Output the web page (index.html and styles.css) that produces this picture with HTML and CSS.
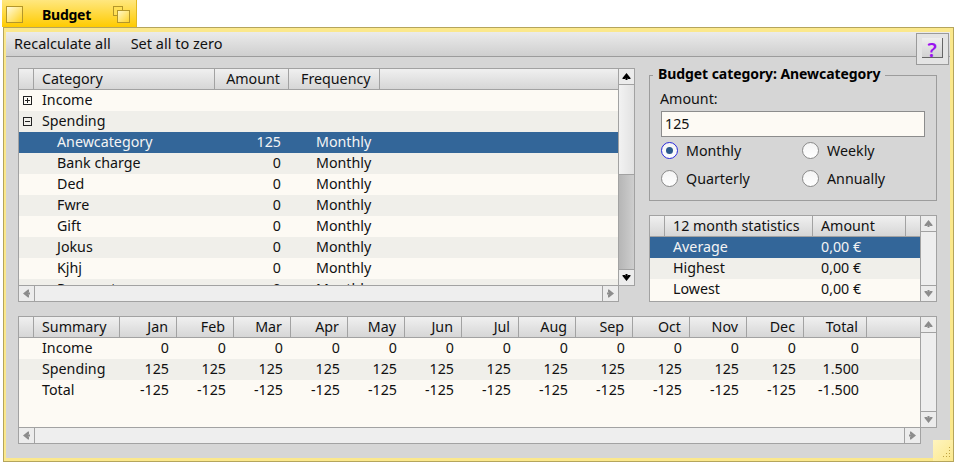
FILE: index.html
```html
<!DOCTYPE html>
<html lang="en">
<head>
    <meta charset="UTF-8">
    <title>Budget</title>
    <link rel="stylesheet" href="styles.css">
</head>
<body>
    <svg class="defs" width="0" height="0">
        <symbol id="arrow" viewBox="0 0 11 9">
            <path d="M5.5 1 L9.5 6 L9.5 7 L7 7 L6.5 6 L6.5 8 L4.5 8 L4.5 6 L4 7 L1.5 7 L1.5 6 Z"/>
        </symbol>
    </svg>

    <div class="tab">
        <span class="tab-close"></span>
        <span class="tab-title">Budget</span>
        <span class="tab-zoom"><i></i><b></b></span>
    </div>

    <div class="window">
        <div class="toolbar">
            <span>Recalculate all</span>
            <span>Set all to zero</span>
        </div>
        <div class="help"><span>?</span></div>

        <div class="content">
            <div class="top">
                <div class="list list-tree">
                    <div class="view">
                        <table>
                            <colgroup><col class="c-gutter"><col class="c-cat"><col class="c-amt"><col class="c-freq"><col></colgroup>
                            <thead>
                                <tr><th></th><th>Category</th><th class="num">Amount</th><th class="freq-head">Frequency</th><th></th></tr>
                            </thead>
                            <tbody>
                                <tr><td class="exp"><span class="expander plus"></span></td><td>Income</td><td></td><td></td><td></td></tr>
                                <tr><td class="exp"><span class="expander"></span></td><td>Spending</td><td></td><td></td><td></td></tr>
                                <tr class="selected"><td></td><td class="child">Anewcategory</td><td class="num">125</td><td class="freq">Monthly</td><td></td></tr>
                                <tr><td></td><td class="child">Bank charge</td><td class="num">0</td><td class="freq">Monthly</td><td></td></tr>
                                <tr><td></td><td class="child">Ded</td><td class="num">0</td><td class="freq">Monthly</td><td></td></tr>
                                <tr><td></td><td class="child">Fwre</td><td class="num">0</td><td class="freq">Monthly</td><td></td></tr>
                                <tr><td></td><td class="child">Gift</td><td class="num">0</td><td class="freq">Monthly</td><td></td></tr>
                                <tr><td></td><td class="child">Jokus</td><td class="num">0</td><td class="freq">Monthly</td><td></td></tr>
                                <tr><td></td><td class="child">Kjhj</td><td class="num">0</td><td class="freq">Monthly</td><td></td></tr>
                                <tr><td></td><td class="child">Payment</td><td class="num">0</td><td class="freq">Monthly</td><td></td></tr>
                            </tbody>
                        </table>
                    </div>
                    <div class="vsb">
                        <div class="sb-btn sb-up on"><svg class="arrow"><use href="#arrow"/></svg></div>
                        <div class="sb-thumb thumb-tree"></div>
                        <div class="sb-track"></div>
                        <div class="sb-btn sb-down on"><svg class="arrow down"><use href="#arrow"/></svg></div>
                    </div>
                    <div class="hsb">
                        <div class="sb-btn sb-left"><svg class="arrow left"><use href="#arrow"/></svg></div>
                        <div class="sb-thumb"></div>
                        <div class="sb-btn sb-right"><svg class="arrow right"><use href="#arrow"/></svg></div>
                    </div>
                </div>

                <div class="side">
                    <fieldset class="group">
                        <legend>Budget category: Anewcategory</legend>
                        <div class="field-label">Amount:</div>
                        <div class="field-input">125</div>
                        <div class="radios">
                            <div class="radio"><span class="dot checked"></span>Monthly</div>
                            <div class="radio"><span class="dot"></span>Weekly</div>
                            <div class="radio"><span class="dot"></span>Quarterly</div>
                            <div class="radio"><span class="dot"></span>Annually</div>
                        </div>
                    </fieldset>

                    <div class="list list-stats">
                        <div class="view">
                            <table>
                                <colgroup><col class="c-gutter"><col class="c-name"><col class="c-val"><col></colgroup>
                                <thead>
                                    <tr><th></th><th>12 month statistics</th><th>Amount</th><th></th></tr>
                                </thead>
                                <tbody>
                                    <tr class="selected"><td></td><td>Average</td><td>0,00 €</td><td></td></tr>
                                    <tr><td></td><td>Highest</td><td>0,00 €</td><td></td></tr>
                                    <tr><td></td><td>Lowest</td><td>0,00 €</td><td></td></tr>
                                </tbody>
                            </table>
                        </div>
                        <div class="vsb">
                            <div class="sb-btn sb-up"><svg class="arrow"><use href="#arrow"/></svg></div>
                            <div class="sb-thumb"></div>
                            <div class="sb-btn sb-down"><svg class="arrow down"><use href="#arrow"/></svg></div>
                        </div>
                    </div>
                </div>
            </div>

            <div class="list list-summary">
                <div class="view">
                    <table>
                        <colgroup><col class="c-gutter"><col class="c-sum"><col class="c-m" span="12"><col class="c-total"><col></colgroup>
                        <thead>
                            <tr>
                                <th></th><th>Summary</th>
                                <th class="num">Jan</th><th class="num">Feb</th><th class="num">Mar</th><th class="num">Apr</th>
                                <th class="num">May</th><th class="num">Jun</th><th class="num">Jul</th><th class="num">Aug</th>
                                <th class="num">Sep</th><th class="num">Oct</th><th class="num">Nov</th><th class="num">Dec</th>
                                <th class="num">Total</th><th></th>
                            </tr>
                        </thead>
                        <tbody>
                            <tr>
                                <td></td><td>Income</td>
                                <td class="num">0</td><td class="num">0</td><td class="num">0</td><td class="num">0</td>
                                <td class="num">0</td><td class="num">0</td><td class="num">0</td><td class="num">0</td>
                                <td class="num">0</td><td class="num">0</td><td class="num">0</td><td class="num">0</td>
                                <td class="num">0</td><td></td>
                            </tr>
                            <tr>
                                <td></td><td>Spending</td>
                                <td class="num">125</td><td class="num">125</td><td class="num">125</td><td class="num">125</td>
                                <td class="num">125</td><td class="num">125</td><td class="num">125</td><td class="num">125</td>
                                <td class="num">125</td><td class="num">125</td><td class="num">125</td><td class="num">125</td>
                                <td class="num">1.500</td><td></td>
                            </tr>
                            <tr>
                                <td></td><td>Total</td>
                                <td class="num">-125</td><td class="num">-125</td><td class="num">-125</td><td class="num">-125</td>
                                <td class="num">-125</td><td class="num">-125</td><td class="num">-125</td><td class="num">-125</td>
                                <td class="num">-125</td><td class="num">-125</td><td class="num">-125</td><td class="num">-125</td>
                                <td class="num">-1.500</td><td></td>
                            </tr>
                        </tbody>
                    </table>
                </div>
                <div class="vsb">
                    <div class="sb-btn sb-up"><svg class="arrow"><use href="#arrow"/></svg></div>
                    <div class="sb-thumb"></div>
                    <div class="sb-btn sb-down"><svg class="arrow down"><use href="#arrow"/></svg></div>
                </div>
                <div class="hsb">
                    <div class="sb-btn sb-left"><svg class="arrow left"><use href="#arrow"/></svg></div>
                    <div class="sb-thumb"></div>
                    <div class="sb-btn sb-right"><svg class="arrow right"><use href="#arrow"/></svg></div>
                </div>
            </div>
        </div>

        <div class="grip">
            <svg width="20" height="21" viewBox="0 0 20 21">
                <path d="M16 7h1v1h-1zM16 10h1v1h-1zM13 13h1v1h-1zM16 13h1v1h-1zM10 16h1v1h-1zM13 16h1v1h-1zM16 16h1v1h-1z" fill="#bfa345"/>
            </svg>
        </div>
    </div>
</body>
</html>
```

FILE: styles.css
```css
* {
    margin: 0;
    padding: 0;
    box-sizing: border-box;
}

body {
    font-family: "Noto Sans", sans-serif;
    font-size: 14.25px;
    color: #111;
    background: #fff;
    width: 955px;
    height: 462px;
    overflow: hidden;
}

.defs {
    display: block;
    height: 0;
}

/* Window tab */
.tab {
    display: flex;
    align-items: flex-start;
    width: 135px;
    height: 27px;
    margin-left: 2px;
    background: linear-gradient(#ffe77f, #ffcb00);
    border-right: 1px solid #e0b820;
}

.tab-close {
    width: 17px;
    height: 17px;
    margin: 6px 0 0 4px;
    border: 1px solid #b3962a;
    background: linear-gradient(135deg, #fffbe0, #ffd21e);
}

.tab-title {
    margin: 5px 0 0 19px;
    font-size: 14px;
    font-weight: 700;
    letter-spacing: -0.25px;
    color: #000;
}

.tab-zoom {
    position: relative;
    width: 17px;
    height: 17px;
    margin: 6px 6px 0 auto;
}

.tab-zoom i,
.tab-zoom b {
    position: absolute;
    display: block;
    border: 1px solid #b3962a;
}

.tab-zoom i {
    left: 0;
    top: 0;
    width: 10px;
    height: 10px;
    background: #ffdf55;
}

.tab-zoom b {
    left: 4px;
    top: 4px;
    width: 13px;
    height: 13px;
    background: linear-gradient(135deg, #fff6c4, #ffd52e);
}

/* Window frame */
.window {
    position: relative;
    display: flex;
    flex-direction: column;
    width: 951px;
    height: 435px;
    margin-left: 3px;
    padding: 4px 3px 3px 2px;
    background: #fbe88c;
    border: 1px solid #b5a55c;
}

.toolbar {
    display: flex;
    gap: 20px;
    height: 25px;
    padding: 0 0 2px 8px;
    align-items: center;
    font-size: 14.5px;
    background: linear-gradient(#ebebeb, #cfcfcf);
    border-bottom: 1px solid #9c9c9c;
}

.help {
    position: absolute;
    top: 5px;
    right: 4px;
    width: 33px;
    height: 32px;
    padding: 4px 5px 6px 5px;
    background: #e4e4e4;
    border: 1px solid #9a9a9a;
}

.help span {
    display: block;
    height: 100%;
    text-align: center;
    font-size: 20px;
    font-weight: 600;
    line-height: 23px;
    color: #9a14f0;
    background: linear-gradient(#eeeeee, #d2d2d2);
    border-right: 1px solid #666;
    border-bottom: 1px solid #666;
}

.content {
    flex: 1;
    padding: 11px 13px 0 12px;
    background: #d6d6d6;
}

.top {
    display: flex;
    gap: 14px;
    height: 234px;
    margin-bottom: 14px;
}

/* Lists with scrollbars */
.list {
    display: grid;
    flex: none;
    grid-template-columns: minmax(0, 1fr) 16px;
    grid-template-rows: minmax(0, 1fr) 16px;
}

.list-tree {
    width: 617px;
    height: 234px;
}

.list-stats {
    width: 288px;
    height: 87px;
    grid-template-rows: minmax(0, 1fr);
}

.list-summary {
    width: 919px;
    height: 128px;
}

.view {
    overflow: hidden;
    background: #fdfaf4;
    border: 1px solid #a2a2a2;
}

table {
    width: 100%;
    table-layout: fixed;
    border-collapse: separate;
    border-spacing: 0;
}

th {
    height: 21px;
    padding: 0 8px;
    font-weight: 400;
    line-height: 18px;
    text-align: left;
    white-space: nowrap;
    background: linear-gradient(#f0f0f0, #d6d6d6);
    border-right: 1px solid #a2a2a2;
    border-bottom: 1px solid #a2a2a2;
}

th:last-child {
    border-right: none;
}

td {
    height: 21px;
    padding: 0 8px 2px;
    line-height: 18px;
    white-space: nowrap;
}

tbody tr:nth-child(even) {
    background: #f0efea;
}

tbody tr.selected {
    background: #336699;
    color: #f4f4f4;
}

.num {
    text-align: right;
}

.c-gutter {
    width: 15px;
}

.c-cat {
    width: 181px;
}

.c-amt {
    width: 74px;
}

.c-freq {
    width: 91px;
}

.c-name {
    width: 148px;
}

.c-val {
    width: 93px;
}

.c-sum {
    width: 86px;
}

.c-m {
    width: 57px;
}

.c-total {
    width: 63px;
}

th.freq-head {
    padding-left: 12px;
}

td.child {
    padding-left: 23px;
}

td.freq {
    padding-left: 27px;
}

td.exp {
    padding: 0 0 0 4px;
    vertical-align: middle;
}

.expander {
    position: relative;
    display: block;
    width: 9px;
    height: 9px;
    border: 1px solid #222;
    background: linear-gradient(to bottom, #222, #222) center / 5px 1px no-repeat;
}

.expander.plus::after {
    content: "";
    position: absolute;
    left: 3px;
    top: 1px;
    width: 1px;
    height: 5px;
    background: #222;
}

.vsb {
    display: flex;
    flex-direction: column;
    border: 1px solid #a2a2a2;
    border-left: none;
}

.hsb {
    display: flex;
    border: 1px solid #a2a2a2;
    border-top: none;
}

.sb-btn {
    flex: none;
    display: flex;
    align-items: center;
    justify-content: center;
    width: 16px;
    height: 16px;
    background: #ececec;
    color: #8c8c8c;
}

.vsb .sb-btn {
    width: 15px;
}

.hsb .sb-btn {
    height: 15px;
}

.sb-btn.on {
    color: #000;
}

.sb-up {
    border-bottom: 1px solid #a2a2a2;
}

.sb-down {
    border-top: 1px solid #a2a2a2;
}

.sb-left {
    border-right: 1px solid #a2a2a2;
}

.sb-right {
    border-left: 1px solid #a2a2a2;
}

.sb-thumb {
    flex: 1;
    background: #eeeeee;
}

.sb-thumb.thumb-tree {
    flex: none;
    height: 90px;
    background: linear-gradient(to right, #f2f2f2, #e2e2e2);
    border-bottom: 1px solid #a2a2a2;
}

.sb-track {
    flex: 1;
    background: linear-gradient(to right, #b6b6b6, #cecece);
}

.arrow {
    width: 11px;
    height: 9px;
    fill: currentColor;
}

.arrow.down {
    transform: rotate(180deg);
}

.arrow.left {
    transform: rotate(-90deg);
}

.arrow.right {
    transform: rotate(90deg);
}

/* Right hand side */
.side {
    display: flex;
    flex-direction: column;
    gap: 14px;
    width: 288px;
    margin-top: -1px;
}

.group {
    height: 134px;
    padding: 0 11px;
    border: 1px solid #9c9c9c;
}

.group legend {
    margin-left: -8px;
    padding: 0 5px 2px;
    font-size: 14px;
    font-weight: 700;
    letter-spacing: -0.07px;
    line-height: 14px;
    color: #000;
}

.field-label {
    margin: 6px 0 0 -1px;
    line-height: 20px;
}

.field-input {
    height: 26px;
    margin-top: 2px;
    padding: 0 3px;
    line-height: 24px;
    background: #fdfaf4;
    border: 1px solid #8c8c8c;
}

.radios {
    display: grid;
    grid-template-columns: 141px 1fr;
    grid-auto-rows: 28px;
    margin-top: -1px;
}

.radio {
    display: flex;
    align-items: center;
    gap: 8px;
}

.dot {
    position: relative;
    width: 17px;
    height: 17px;
    border-radius: 50%;
    border: 1px solid #8a8a8a;
    background: linear-gradient(#f4f4f4, #fff);
}

.dot.checked {
    border-color: #2a2adb;
}

.dot.checked::after {
    content: "";
    position: absolute;
    left: 4px;
    top: 4px;
    width: 7px;
    height: 7px;
    border-radius: 50%;
    background: #2b5a8c;
}

.grip {
    position: absolute;
    right: 0;
    bottom: 0;
    width: 20px;
    height: 21px;
    background: linear-gradient(135deg, #fff4bf, #fbe88c);
}

.grip svg {
    display: block;
}
```
